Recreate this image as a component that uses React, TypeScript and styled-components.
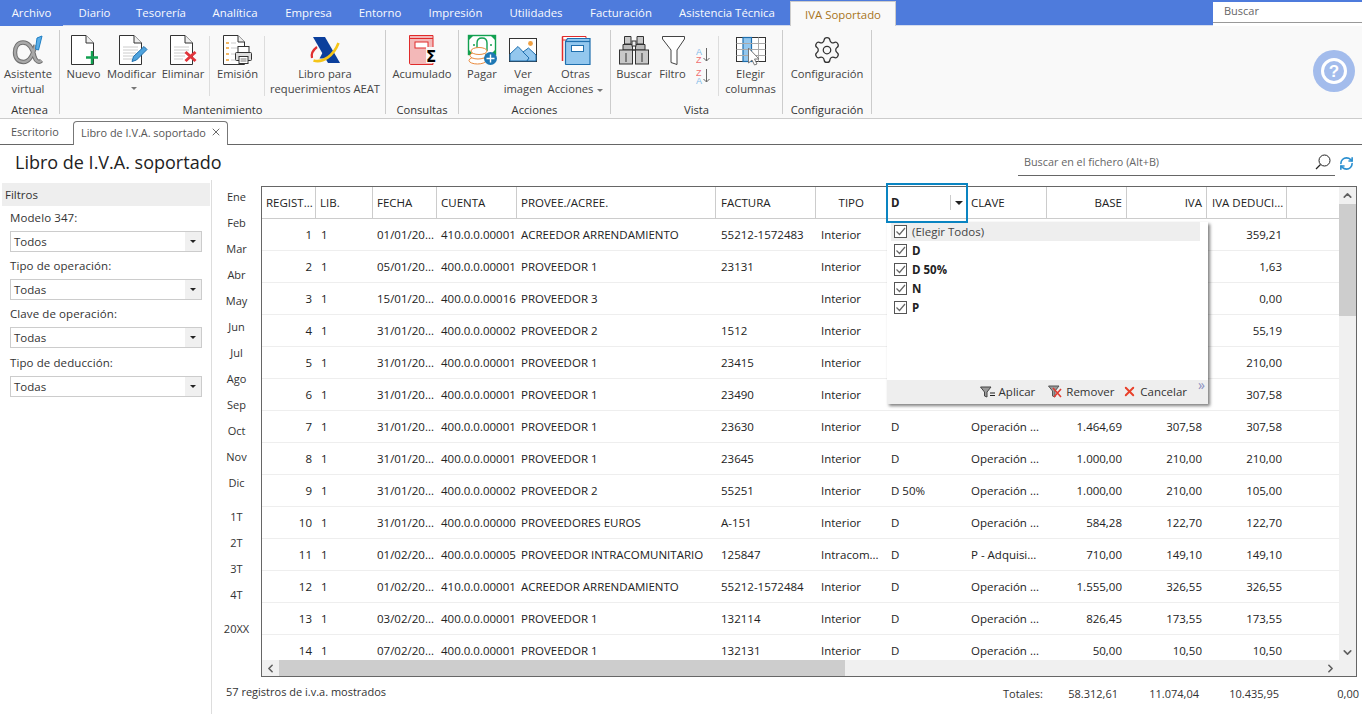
import React from "react";
import styled, { createGlobalStyle } from "styled-components";
import { Settings, RefreshCw, ChevronUp, ChevronDown, ChevronLeft, ChevronRight, X } from "lucide-react";

const FONT = `"Open Sans", "Noto Sans", "Liberation Sans", sans-serif`;

const Global = createGlobalStyle`
  html, body { margin: 0; padding: 0; height: 100%; background: #fff; overflow: hidden; }
  body { font-family: ${FONT}; font-size: 11.5px; color: #333; }
  * { box-sizing: border-box; }
`;

const Page = styled.div`
  width: 1362px; height: 714px; display: flex; flex-direction: column; overflow: hidden;
`;

/* ---------- top tabs ---------- */
const TopBar = styled.div`
  height: 26px; background: #4e7bdc; display: flex; align-items: stretch; flex: none; position: relative;
`;
const TopTab = styled.div<{ $w: number; $first?: boolean }>`
  width: ${p => p.$w}px; flex: none; color: #fff; display: flex; align-items: center; justify-content: center;
  padding-bottom: 1px; font-size: 11.4px; opacity: .97;
  border-bottom: 1px solid ${p => (p.$first ? "#4e7bdc" : "#d4dcee")};
`;
const ActiveTopTab = styled.div`
  width: 106px; flex: none; margin-top: 1px; background: #f9f9f9; color: #a8741a; font-size: 11.4px;
  border: 1px solid #ccc; border-bottom: none; display: flex; align-items: center; justify-content: center;
`;
const TopFill = styled.div`
  flex: 1; border-bottom: 1px solid #d4dcee;
`;
const TopSearch = styled.div`
  width: 149px; flex: none; margin-top: 2px; background: #fff; position: relative; color: #666;
  padding: 1px 0 3px 11px; font-size: 11px; line-height: 16px;
  &::after { content: ""; position: absolute; left: 0; right: 0; top: 20px; height: 1px; background: #999; }
`;

/* ---------- ribbon ---------- */
const Ribbon = styled.div`
  height: 93px; flex: none; background: #f9f9f9; border-bottom: 1px solid #ccc; display: flex; position: relative;
  padding-top: 4px; padding-bottom: 4px; font-size: 11.2px;
`;
const Group = styled.div<{ $w: number }>`
  width: ${p => p.$w}px; flex: none; border-right: 1px solid #ccc; display: flex; flex-direction: column;
`;
const GroupItems = styled.div`
  flex: 1; display: flex; min-height: 0;
`;
const GroupLabel = styled.div`
  height: 12px; text-align: center; color: #333; line-height: 16px; white-space: nowrap;
`;
const Item = styled.div<{ $w: number; $sep?: boolean }>`
  width: ${p => p.$w}px; flex: none; display: flex; flex-direction: column; align-items: center;
  padding-top: 4px; color: #444; line-height: 15px; text-align: center; white-space: nowrap;
  position: relative;
  ${p => p.$sep ? `&::after { content: ""; position: absolute; right: 0; top: 6px; height: 60px; width: 1px; background: #ddd; }` : ""}
`;
const IconBox = styled.div`
  height: 32px; width: 34px; flex: none; display: flex; align-items: center; justify-content: center;
`;
const Caret = styled.span`
  display: inline-block; width: 0; height: 0; border-left: 3px solid transparent; border-right: 3px solid transparent;
  border-top: 3px solid #777; vertical-align: middle; margin-left: 4px;
`;
const CaretLine = styled.div`
  height: 15px; display: flex; align-items: center; justify-content: center;
`;
const SortStack = styled.div`
  display: flex; flex-direction: column; gap: 5px; padding-top: 13px;
`;
const HelpCircle = styled.div`
  width: 42px; height: 42px; border-radius: 50%; background: #a3bcec; display: flex; align-items: center; justify-content: center;
  position: absolute; left: 1313px; top: 24px;
`;

/* ---------- document tabs ---------- */
const DocTabs = styled.div`
  height: 26px; flex: none; border-bottom: 1px solid #666; display: flex; align-items: flex-end; padding-left: 11px; color: #555; font-size: 10.9px;
`;
const DocTab = styled.div`
  width: 62px; height: 25px; line-height: 25px; flex: none;
`;
const DocTabActive = styled.div`
  width: 155px; height: 24px; margin-bottom: -1px; background: #fff; border: 1px solid #777; border-bottom: none;
  border-radius: 4px 4px 0 0; display: flex; align-items: center; padding: 0 0 3px 7px; gap: 4px; white-space: nowrap; color: #555;
`;

/* ---------- title row ---------- */
const TitleRow = styled.div`
  height: 35px; flex: none; display: flex; align-items: flex-start; padding-left: 15px; position: relative;
`;
const Title = styled.h1`
  margin: 5px 0 0; font-weight: 400; font-size: 18px; line-height: 24px; color: #222; flex: 1;
`;
const SearchField = styled.div`
  width: 317px; height: 28px; margin-top: 3px; border-bottom: 1px solid #666; display: flex; align-items: center; padding: 0 4px 0 6px;
  color: #666; font-size: 10.8px; justify-content: space-between; flex: none;
`;
const Refresh = styled.div`
  width: 27px; flex: none; display: flex; justify-content: center; padding: 11px 5px 0 0; color: #2a8fd0;
`;

/* ---------- content ---------- */
const Content = styled.div`
  flex: 1; display: flex; min-height: 0;
`;
const LeftPanel = styled.aside`
  width: 212px; flex: none; border-right: 1px solid #ddd; padding: 3px 1px 0 2px;
`;
const PanelHead = styled.div`
  height: 23px; line-height: 23px; background: #eee; padding-left: 3px; color: #333;
`;
const FieldLabel = styled.div<{ $top: number }>`
  margin: ${p => p.$top}px 0 0 8px; height: 16px; line-height: 16px; color: #333; letter-spacing: .1px;
`;
const SelectBox = styled.div`
  margin: 5px 8px 0 8px; height: 21px; border: 1px solid #ccc; display: flex; align-items: center; padding-left: 3px; background: #fff; color: #333;
  justify-content: space-between;
`;
const SelectBtn = styled.div`
  width: 16px; height: 19px; background: #f0f0f0; display: flex; align-items: center; justify-content: center;
  &::after { content: ""; width: 0; height: 0; border-left: 3px solid transparent; border-right: 3px solid transparent; border-top: 3px solid #222; }
`;
const Months = styled.div`
  width: 49px; flex: none; display: flex; flex-direction: column; align-items: center; padding-top: 4px; color: #333;
`;
const Month = styled.div<{ $gap?: number }>`
  height: 26px; line-height: 26px; margin-top: ${p => p.$gap ?? 0}px; font-size: 11px;
`;

const Main = styled.div`
  flex: 1; display: flex; flex-direction: column; min-width: 0; padding-top: 6px;
`;
const GridFrame = styled.div`
  width: 1096px; height: 491px; border: 1px solid #666; display: flex; flex-direction: column; position: relative; flex: none;
`;
const GridBody = styled.div`
  height: 473px; flex: none; display: flex;
`;
const Viewport = styled.div`
  flex: 1; overflow: hidden; min-width: 0;
`;
const COLS = "54px 57px 64px 80px 199px 100px 71px 80px 80px 80px 80px 80px 52px";
const HeadRow = styled.div`
  display: grid; grid-template-columns: ${COLS}; height: 32px; border-bottom: 1px solid #ccc; color: #222;
`;
const HeadCell = styled.div<{ $right?: boolean; $pr?: number; $pl?: number; $noSep?: boolean }>`
  display: flex; align-items: center; justify-content: ${p => (p.$right ? "flex-end" : "flex-start")};
  padding: 0 ${p => p.$pr ?? 4}px 0 ${p => p.$pl ?? 4}px; white-space: nowrap; overflow: hidden;
  border-right: ${p => (p.$noSep ? "none" : "1px solid #ccc")};
`;
const DHead = styled.div`
  display: flex; align-items: center; padding-left: 4px; font-weight: 700; position: relative; color: #222;
`;
const DCaretSep = styled.span`
  position: absolute; left: 63px; top: 8px; height: 15px; width: 1px; background: #ccc;
`;
const DCaret = styled.span`
  position: absolute; left: 68px; top: 14px; width: 0; height: 0; border-left: 4px solid transparent; border-right: 4px solid transparent; border-top: 4px solid #222;
`;
const Row = styled.div`
  display: grid; grid-template-columns: ${COLS}; height: 32px; border-bottom: 1px solid #eee; color: #222;
`;
const Cell = styled.div<{ $right?: boolean; $pr?: number; $pl?: number }>`
  display: flex; align-items: center; justify-content: ${p => (p.$right ? "flex-end" : "flex-start")};
  padding: 0 ${p => p.$pr ?? 5}px 0 ${p => (p.$right ? 0 : p.$pl ?? 5)}px; white-space: nowrap; overflow: hidden;
`;
const VBar = styled.div`
  width: 17px; flex: none; background: #f0f0f0; display: flex; flex-direction: column;
`;
const ScrollBtn = styled.div<{ $w?: number }>`
  width: ${p => p.$w ?? 17}px; height: 16px; flex: none; display: flex; align-items: center; justify-content: center; color: #606060;
`;
const VThumb = styled.div`
  height: 112px; background: #cdcdcd; margin-top: 1px; flex: none;
`;
const VSpace = styled.div`
  flex: 1;
`;
const HBar = styled.div`
  height: 16px; flex: none; background: #f0f0f0; display: flex;
`;
const HTrack = styled.div`
  flex: 1; display: flex;
`;
const HThumb = styled.div`
  width: 566px; background: #cdcdcd;
`;
const Corner = styled.div`
  width: 17px; flex: none;
`;

/* ---------- overlays ---------- */
const FocusBox = styled.div`
  position: absolute; left: 624px; top: -4px; width: 82px; height: 40px; border: 2px solid #0a84c1; pointer-events: none;
`;
const Popup = styled.div`
  position: absolute; left: 625px; top: 35px; width: 321px; height: 182px; background: #fff;
  box-shadow: 2px 2px 3px rgba(0,0,0,.5); display: flex; flex-direction: column; color: #222;
`;
const PopupList = styled.div`
  flex: 1; padding: 0 8px 0 4px;
`;
const PopupRow = styled.div<{ $active?: boolean; $bold?: boolean }>`
  height: 19px; display: flex; align-items: center; gap: 5px; padding-left: 3px;
  background: ${p => (p.$active ? "#eee" : "transparent")};
  color: ${p => (p.$active ? "#444" : "#222")};
  font-weight: ${p => (p.$bold ? 700 : 400)};
`;
const Check = styled.span`
  width: 13px; height: 13px; border: 1px solid #555; display: flex; align-items: center; justify-content: center; flex: none; background: #fff;
`;
const PopupFooter = styled.div`
  height: 24px; flex: none; background: #eee; display: flex; align-items: center; justify-content: flex-end; padding: 0 21px 1px 0;
  position: relative; color: #333;
`;
const FootBtn = styled.div<{ $ml: number }>`
  display: flex; align-items: center; gap: 3px; margin-left: ${p => p.$ml}px;
`;
const Chevrons = styled.span`
  position: absolute; right: 3px; top: -1px; font-size: 14px; line-height: 12px; color: #8a8fc0;
`;

/* ---------- footer ---------- */
const Foot = styled.div`
  display: flex; height: 30px; color: #333; font-size: 11px; padding-top: 7px;
`;
const FootInfo = styled.div`
  width: 742px; flex: none; margin-left: -35px; margin-right: 35px;
`;
const TotalLabel = styled.div`
  width: 56px; flex: none; padding-top: 2px;
`;
const TotalVal = styled.div<{ $w: number }>`
  width: ${p => p.$w}px; flex: none; text-align: right; padding-top: 2px;
`;

/* ---------- icons ---------- */
const Doc = () => (
  <>
    <path d="M3.5 1.5H18L25.5 9V30.5H3.5Z" fill="#fff" stroke="#333" />
    <path d="M18 1.5V9H25.5" fill="#eee" stroke="#333" />
  </>
);
const Lines = () => (
  <path d="M7 13H22M7 16H22M7 19H20M7 22H18M7 25H16" stroke="#ccc" strokeWidth="1" />
);
const S = (p: { children: React.ReactNode }) => (
  <svg width={32} height={32} viewBox="0 0 32 32" fill="none">{p.children}</svg>
);
const ALPHA = "M29.5 26.5C27 29 24 27.5 22.5 23C20 12 16 8.5 11 8.5C5.5 8.5 3 13 3 18.5C3 24.5 6.5 28 11.5 28C17 28 21 21 23.5 11";
const IconAlpha = () => (
  <S>
    <path d={ALPHA} stroke="#6f6f6f" strokeWidth="4.4" />
    <path d={ALPHA} stroke="#a8a8a8" strokeWidth="2.4" />
    <path d="M25 4L30 2L26.5 16L23.5 15Z" fill="#5aaee8" stroke="#1f7fc4" />
  </S>
);
const IconNew = () => (
  <S>
    <Doc />
    <path d="M24 17V30M18 23.5H30" stroke="#12a050" strokeWidth="2.4" />
  </S>
);
const IconEdit = () => (
  <S>
    <Doc />
    <Lines />
    <path d="M16 27.5L17.5 22.5L28 12.5L31 15.5L20.5 26Z" fill="#4fa3dd" stroke="#1f6fae" strokeWidth="1" />
  </S>
);
const IconDelete = () => (
  <S>
    <Doc />
    <Lines />
    <path d="M18.5 18L28.5 27M28.5 18L18.5 27" stroke="#e0353c" strokeWidth="3" />
  </S>
);
const IconPrint = () => (
  <S>
    <path d="M1.5 1.5H16L22.5 8V30.5H1.5Z" fill="#fff" stroke="#333" />
    <path d="M16 1.5V8H22.5" fill="#eee" stroke="#333" />
    <path d="M4 9H7M4 14H7M4 20H7M4 26H7" stroke="#f0a030" strokeWidth="1.4" />
    <path d="M9 9H14M9 14H18M9 20H13M9 26H13" stroke="#ccc" />
    <rect x="16" y="12.5" width="11" height="6" fill="#fff" stroke="#333" />
    <rect x="13.5" y="18.5" width="16" height="8" rx="1" fill="#ddd" stroke="#333" />
    <rect x="17" y="22.5" width="9" height="7" fill="#fff" stroke="#333" />
    <path d="M18.5 25H24.5M18.5 27H24.5" stroke="#777" />
  </S>
);
const IconAeat = () => (
  <S>
    <path d="M4 3H16L31 29H19Z" fill="#0b3f9c" />
    <path d="M14.5 17L10.5 24.5H19Z" fill="#0b3f9c" />
    <path d="M4.5 26.5C14 29.5 25 21 29.5 9" stroke="#f5c518" strokeWidth="2.6" />
    <path d="M3 24C2 20 4 16 8 13" stroke="#e03030" strokeWidth="2.2" />
  </S>
);
const IconSum = () => (
  <S>
    <path d="M3.5 1.5H27V30.5H5C4 30.5 3.5 30 3.5 29Z" fill="#f3b8b8" stroke="#e02b2b" />
    <path d="M3.5 4.5H27" stroke="#e02b2b" />
    <rect x="9" y="8" width="13" height="6" fill="#fff" stroke="#e02b2b" />
    <rect x="20" y="13" width="11" height="16" fill="#f9f9f9" />
    <text x="20" y="28" fontFamily="'DejaVu Sans', sans-serif" fontSize="15" fontWeight="700" fill="#000">Σ</text>
  </S>
);
const IconPay = () => (
  <S>
    <rect x="2.5" y="1.5" width="27" height="19" fill="#fff" stroke="#12a050" strokeWidth="1.4" />
    <path d="M3 2H7L3 6ZM29 2H25L29 6ZM3 20H7L3 16ZM29 20H25L29 16Z" fill="#12a050" />
    <path d="M11 17V9C11 5 14 4 16 4C18 4 21 5 21 9V17" stroke="#12a050" strokeWidth="1.4" />
    <circle cx="8" cy="11" r="1" fill="#12a050" />
    <circle cx="25" cy="11" r="1" fill="#12a050" />
    <ellipse cx="11.5" cy="26.5" rx="8.5" ry="3.5" fill="#fff" stroke="#ea8a3c" />
    <ellipse cx="12" cy="21.5" rx="8" ry="3.5" fill="#fff" stroke="#ea8a3c" />
    <ellipse cx="13" cy="17" rx="8" ry="3.5" fill="#fff" stroke="#ea8a3c" />
    <circle cx="24.5" cy="24.5" r="6.5" fill="#1e78b4" />
    <path d="M24.5 20.5V28.5M20.5 24.5H28.5" stroke="#fff" strokeWidth="1.4" />
  </S>
);
const IconImage = () => (
  <S>
    <rect x="2.5" y="4.5" width="27" height="23" fill="#fff" stroke="#333" />
    <circle cx="23.5" cy="9.5" r="2.4" fill="#f0a040" />
    <path d="M3 25V20L11 12.5L22 24L20 27H3Z" fill="#93c7ee" stroke="#1f6fae" />
    <path d="M16 18L21.5 14L29 21V27H20L22 24Z" fill="#93c7ee" stroke="#1f6fae" />
  </S>
);
const IconBooks = () => (
  <S>
    <path d="M2.5 2.5H26V6H2.5Z" fill="#fff" stroke="#e02b2b" />
    <path d="M2.5 2.5V27" stroke="#e02b2b" strokeWidth="1.5" />
    <path d="M5.5 7.5L7.5 4.5H30V30.5H6C5.5 30.5 5.5 30 5.5 30Z" fill="#93c7ee" stroke="#1f6fae" strokeWidth="1.2" />
    <path d="M5.5 7.5H30" stroke="#1f6fae" strokeWidth="1.2" />
    <rect x="11.5" y="11.5" width="12" height="6" fill="#fff" stroke="#1f6fae" />
  </S>
);
const IconBinoculars = () => (
  <S>
    <path d="M6.5 2.5H13V10H6.5ZM19 2.5H25.5V10H19Z" fill="#c8c8c8" stroke="#333" />
    <path d="M5 10.5H14.5V16H17.5V10.5H27V16H5Z" fill="#bbb" stroke="#333" />
    <rect x="1.5" y="16" width="13" height="14" fill="#c8c8c8" stroke="#333" />
    <rect x="17.5" y="16" width="13" height="14" fill="#c8c8c8" stroke="#333" />
    <path d="M8 19V28M24 19V28" stroke="#333" />
    <rect x="14" y="7" width="4" height="5" fill="#eee" stroke="#333" />
  </S>
);
const IconFunnel = () => (
  <S>
    <path d="M5.5 2.5H27.5V5L20 16V30.5L14 28.5V16L5.5 5Z" fill="#fff" stroke="#444" />
  </S>
);
const IconSort = ({ down }: { down?: boolean }) => (
  <svg width="15" height="16" viewBox="0 0 15 16">
    <text x="0" y="7.5" fontSize="9" fontFamily="'Liberation Sans', sans-serif" fill={down ? "#f07070" : "#7eb8e8"}>{down ? "Z" : "A"}</text>
    <text x="0" y="15.5" fontSize="9" fontFamily="'Liberation Sans', sans-serif" fill={down ? "#7eb8e8" : "#f07070"}>{down ? "A" : "Z"}</text>
    <path d="M10.5 1V14M7.5 11L10.5 14L13.5 11" stroke="#666" fill="none" />
  </svg>
);
const IconColumns = () => (
  <S>
    <rect x="1.5" y="3.5" width="29" height="24" fill="#fff" stroke="#333" />
    <rect x="8" y="3.5" width="8.5" height="24" fill="#93c7ee" stroke="#1f6fae" strokeWidth="1.2" />
    <path d="M1.5 9.5H30.5M1.5 15.5H30.5M1.5 21.5H30.5M23.5 3.5V27.5" stroke="#aaa" />
    <path d="M13.5 14V29L17 26L19.5 31L22 30L19.5 25H24Z" fill="#fff" stroke="#777" />
  </S>
);
const IconCheck = () => (
  <svg width="11" height="11" viewBox="0 0 11 11" fill="none"><path d="M1.5 5.5L4.5 8.5L10 2" stroke="#666" strokeWidth="1.2" /></svg>
);
const IconSearch = () => (
  <svg width="16" height="16" viewBox="0 0 16 16" fill="none">
    <circle cx="9.5" cy="6.5" r="5.5" stroke="#222" />
    <path d="M5.5 10.5L1 15" stroke="#222" strokeWidth="1.2" />
  </svg>
);
const IconApply = () => (
  <svg width="16" height="12" viewBox="0 0 16 12" fill="none">
    <path d="M0.5 1H11L7 6V11L4.5 10V6Z" fill="#999" stroke="#444" />
    <path d="M10 7H15M10 9.5H15" stroke="#222" />
  </svg>
);
const IconRemove = () => (
  <svg width="15" height="14" viewBox="0 0 15 14" fill="none">
    <path d="M0.5 1H11L7 6V12L4.5 11V6Z" fill="#999" stroke="#555" />
    <path d="M5 3L13 12M13 4L6 12" stroke="#e03a30" strokeWidth="1.6" />
  </svg>
);

/* ---------- data ---------- */
const tabs: [string, number][] = [
  ["Archivo", 63], ["Diario", 63], ["Tesorería", 70], ["Analítica", 78], ["Empresa", 69],
  ["Entorno", 74], ["Impresión", 77], ["Utilidades", 84], ["Facturación", 86], ["Asistencia Técnica", 126],
];
const heads = ["LIB.", "FECHA", "CUENTA", "PROVEE./ACREE."];
const op = "Operación ...";
type R = [number, string, string, string, string, string, string?, string?, string?, string?, string?];
const rows: R[] = [
  [1, "01/01/20...", "410.0.0.00001", "ACREEDOR ARRENDAMIENTO", "55212-1572483", "Interior", "", "", "", "", "359,21"],
  [2, "05/01/20...", "400.0.0.00001", "PROVEEDOR 1", "23131", "Interior", "", "", "", "", "1,63"],
  [3, "15/01/20...", "400.0.0.00016", "PROVEEDOR 3", "", "Interior", "", "", "", "", "0,00"],
  [4, "31/01/20...", "400.0.0.00002", "PROVEEDOR 2", "1512", "Interior", "", "", "", "", "55,19"],
  [5, "31/01/20...", "400.0.0.00001", "PROVEEDOR 1", "23415", "Interior", "", "", "", "", "210,00"],
  [6, "31/01/20...", "400.0.0.00001", "PROVEEDOR 1", "23490", "Interior", "", "", "", "", "307,58"],
  [7, "31/01/20...", "400.0.0.00001", "PROVEEDOR 1", "23630", "Interior", "D", op, "1.464,69", "307,58", "307,58"],
  [8, "31/01/20...", "400.0.0.00001", "PROVEEDOR 1", "23645", "Interior", "D", op, "1.000,00", "210,00", "210,00"],
  [9, "31/01/20...", "400.0.0.00002", "PROVEEDOR 2", "55251", "Interior", "D 50%", op, "1.000,00", "210,00", "105,00"],
  [10, "31/01/20...", "400.0.0.00000", "PROVEEDORES EUROS", "A-151", "Interior", "D", op, "584,28", "122,70", "122,70"],
  [11, "01/02/20...", "400.0.0.00005", "PROVEEDOR INTRACOMUNITARIO", "125847", "Intracom...", "D", "P - Adquisi...", "710,00", "149,10", "149,10"],
  [12, "01/02/20...", "410.0.0.00001", "ACREEDOR ARRENDAMIENTO", "55212-1572484", "Interior", "D", op, "1.555,00", "326,55", "326,55"],
  [13, "03/02/20...", "400.0.0.00001", "PROVEEDOR 1", "132114", "Interior", "D", op, "826,45", "173,55", "173,55"],
  [14, "07/02/20...", "400.0.0.00001", "PROVEEDOR 1", "132131", "Interior", "D", op, "50,00", "10,50", "10,50"],
];
const filters: [string, string, number][] = [
  ["Modelo 347:", "Todos", 4],
  ["Tipo de operación:", "Todas", 6],
  ["Clave de operación:", "Todas", 6],
  ["Tipo de deducción:", "Todas", 7],
];
const months = ["Ene", "Feb", "Mar", "Abr", "May", "Jun", "Jul", "Ago", "Sep", "Oct", "Nov", "Dic"];

export default function App() {
  return (
    <Page>
      <Global />
      <TopBar>
        {tabs.map(([t, w], i) => <TopTab key={t} $w={w} $first={i === 0}>{t}</TopTab>)}
        <ActiveTopTab>IVA Soportado</ActiveTopTab>
        <TopFill />
        <TopSearch>Buscar</TopSearch>
      </TopBar>

      <Ribbon>
        <Group $w={60}>
          <GroupItems>
            <Item $w={56}><IconBox><IconAlpha /></IconBox>Asistente<br />virtual</Item>
          </GroupItems>
          <GroupLabel>Atenea</GroupLabel>
        </Group>
        <Group $w={326}>
          <GroupItems>
            <Item $w={47}><IconBox><IconNew /></IconBox>Nuevo</Item>
            <Item $w={49}><IconBox><IconEdit /></IconBox>Modificar<CaretLine><Caret /></CaretLine></Item>
            <Item $w={54} $sep><IconBox><IconDelete /></IconBox>Eliminar</Item>
            <Item $w={55} $sep><IconBox><IconPrint /></IconBox>Emisión</Item>
            <Item $w={120}><IconBox><IconAeat /></IconBox>Libro para<br />requerimientos AEAT</Item>
          </GroupItems>
          <GroupLabel>Mantenimiento</GroupLabel>
        </Group>
        <Group $w={73}>
          <GroupItems>
            <Item $w={72}><IconBox><IconSum /></IconBox>Acumulado</Item>
          </GroupItems>
          <GroupLabel>Consultas</GroupLabel>
        </Group>
        <Group $w={152}>
          <GroupItems>
            <Item $w={46}><IconBox><IconPay /></IconBox>Pagar</Item>
            <Item $w={36}><IconBox><IconImage /></IconBox>Ver<br />imagen</Item>
            <Item $w={69}><IconBox><IconBooks /></IconBox>Otras<br /><span>Acciones<Caret /></span></Item>
          </GroupItems>
          <GroupLabel>Acciones</GroupLabel>
        </Group>
        <Group $w={172}>
          <GroupItems>
            <Item $w={46}><IconBox><IconBinoculars /></IconBox>Buscar</Item>
            <Item $w={31}><IconBox><IconFunnel /></IconBox>Filtro</Item>
            <Item $w={31} $sep><SortStack><IconSort /><IconSort down /></SortStack></Item>
            <Item $w={63}><IconBox><IconColumns /></IconBox>Elegir<br />columnas</Item>
          </GroupItems>
          <GroupLabel>Vista</GroupLabel>
        </Group>
        <Group $w={89}>
          <GroupItems>
            <Item $w={88}><IconBox><Settings size={30} strokeWidth={1} color="#333" /></IconBox>Configuración</Item>
          </GroupItems>
          <GroupLabel>Configuración</GroupLabel>
        </Group>
        <HelpCircle>
          <svg width="30" height="30" viewBox="0 0 30 30" fill="none">
            <circle cx="15" cy="15" r="11.5" stroke="#fff" strokeWidth="3" />
            <text x="15" y="21" textAnchor="middle" fontFamily="'Liberation Sans', sans-serif" fontSize="17" fontWeight="700" fill="#fff">?</text>
          </svg>
        </HelpCircle>
      </Ribbon>

      <DocTabs>
        <DocTab>Escritorio</DocTab>
        <DocTabActive>Libro de I.V.A. soportado <X size={12} strokeWidth={1.6} color="#444" /></DocTabActive>
      </DocTabs>

      <TitleRow>
        <Title>Libro de I.V.A. soportado</Title>
        <SearchField>Buscar en el fichero (Alt+B)<IconSearch /></SearchField>
        <Refresh><RefreshCw size={15} strokeWidth={2.6} /></Refresh>
      </TitleRow>

      <Content>
        <LeftPanel>
          <PanelHead>Filtros</PanelHead>
          {filters.map(([l, v, t]) => (
            <React.Fragment key={l}>
              <FieldLabel $top={t}>{l}</FieldLabel>
              <SelectBox>{v}<SelectBtn /></SelectBox>
            </React.Fragment>
          ))}
        </LeftPanel>
        <Months>
          {months.map(m => <Month key={m}>{m}</Month>)}
          {["1T", "2T", "3T", "4T"].map((m, i) => <Month key={m} $gap={i === 0 ? 8 : 0}>{m}</Month>)}
          <Month $gap={8}>20XX</Month>
        </Months>
        <Main>
          <GridFrame>
            <GridBody>
              <Viewport>
                <HeadRow>
                  <HeadCell $pr={0}>REGIST...</HeadCell>
                  {heads.map(h => <HeadCell key={h}>{h}</HeadCell>)}
                  <HeadCell $pl={5}>FACTURA</HeadCell>
                  <HeadCell $right $pr={23} $noSep>TIPO</HeadCell>
                  <DHead>D<DCaretSep /><DCaret /></DHead>
                  <HeadCell>CLAVE</HeadCell>
                  <HeadCell $right>BASE</HeadCell>
                  <HeadCell $right>IVA</HeadCell>
                  <HeadCell $pl={5}>IVA DEDUCI...</HeadCell>
                  <HeadCell $noSep />
                </HeadRow>
                {rows.map(r => (
                  <Row key={r[0]}>
                    <Cell $right $pr={4}>{r[0]}</Cell>
                    <Cell>1</Cell>
                    <Cell $pl={4}>{r[1]}</Cell>
                    <Cell $pl={4}>{r[2]}</Cell>
                    <Cell $pl={4}>{r[3]}</Cell>
                    <Cell>{r[4]}</Cell>
                    <Cell>{r[5]}</Cell>
                    <Cell $pl={4}>{r[6]}</Cell>
                    <Cell $pl={4}>{r[7]}</Cell>
                    <Cell $right>{r[8]}</Cell>
                    <Cell $right>{r[9]}</Cell>
                    <Cell $right>{r[10]}</Cell>
                    <Cell />
                  </Row>
                ))}
              </Viewport>
              <VBar>
                <ScrollBtn><ChevronUp size={13} strokeWidth={3} /></ScrollBtn>
                <VThumb />
                <VSpace />
                <ScrollBtn><ChevronDown size={13} strokeWidth={3} /></ScrollBtn>
              </VBar>
            </GridBody>
            <HBar>
              <ScrollBtn><ChevronLeft size={13} strokeWidth={3} /></ScrollBtn>
              <HTrack><HThumb /></HTrack>
              <ScrollBtn><ChevronRight size={13} strokeWidth={3} /></ScrollBtn>
              <Corner />
            </HBar>
            <Popup>
              <PopupList>
                <PopupRow $active><Check><IconCheck /></Check>(Elegir Todos)</PopupRow>
                {["D", "D 50%", "N", "P"].map(o => (
                  <PopupRow key={o} $bold><Check><IconCheck /></Check>{o}</PopupRow>
                ))}
              </PopupList>
              <PopupFooter>
                <FootBtn $ml={0}><IconApply />Aplicar</FootBtn>
                <FootBtn $ml={13}><IconRemove />Remover</FootBtn>
                <FootBtn $ml={8}><X size={15} strokeWidth={3} color="#e8402a" />Cancelar</FootBtn>
                <Chevrons>»</Chevrons>
              </PopupFooter>
            </Popup>
            <FocusBox />
          </GridFrame>
          <Foot>
            <FootInfo>57 registros de i.v.a. mostrados</FootInfo>
            <TotalLabel>Totales:</TotalLabel>
            <TotalVal $w={59}>58.312,61</TotalVal>
            <TotalVal $w={81}>11.074,04</TotalVal>
            <TotalVal $w={80}>10.435,95</TotalVal>
            <TotalVal $w={80}>0,00</TotalVal>
          </Foot>
        </Main>
      </Content>
    </Page>
  );
}
